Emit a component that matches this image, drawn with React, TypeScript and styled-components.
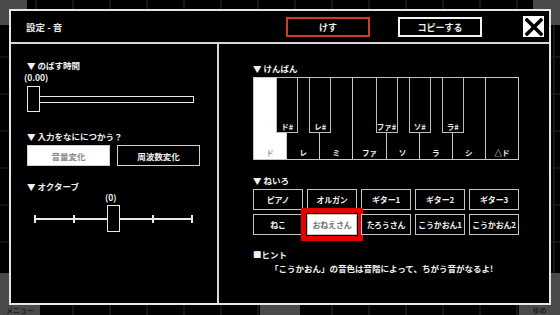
import styled, { createGlobalStyle, css } from "styled-components";

const GlobalStyle = createGlobalStyle`
  html, body {
    margin: 0;
    padding: 0;
    background: #000;
  }
  body {
    font-family: "Noto Sans CJK JP", "Noto Sans", sans-serif;
    font-weight: 700;
    color: #fff;
  }
`;

const Stage = styled.div`
  position: relative;
  width: 560px;
  height: 315px;
  overflow: hidden;
  background-color: #000;
  background-image: repeating-linear-gradient(90deg, transparent 0 35px, #161616 35px 37px),
    repeating-linear-gradient(0deg, transparent 0 35px, #121212 35px 37px);
`;

const BgTile = styled.div<{ $x: number; $y: number; $w: number; $h: number }>`
  position: absolute;
  left: ${(p) => p.$x}px;
  top: ${(p) => p.$y}px;
  width: ${(p) => p.$w}px;
  height: ${(p) => p.$h}px;
  background: #4a4a4a;
  color: #222;
  font-size: 7px;
  display: flex;
  align-items: flex-end;
  justify-content: center;
`;

const Modal = styled.div`
  position: absolute;
  left: 9px;
  top: 9px;
  width: 542px;
  height: 296px;
  box-sizing: border-box;
  border: 2px solid #e6e6e6;
  background: #000;
  display: flex;
  flex-direction: column;
`;

const Header = styled.div`
  height: 31px;
  border-bottom: 2px solid #d8d8d8;
  display: flex;
  align-items: center;
  padding: 0 5px 0 15px;
`;

const Title = styled.div`
  flex: 1;
  font-size: 9.5px;
  color: #e8e8e8;
`;

const HeaderButton = styled.div<{ $danger?: boolean; $gap: number }>`
  width: 84px;
  height: 20px;
  box-sizing: border-box;
  border: 2px solid ${(p) => (p.$danger ? "#d23a26" : "#f2f2f2")};
  margin-right: ${(p) => p.$gap}px;
  margin-top: 1px;
  display: flex;
  align-items: center;
  justify-content: center;
  font-size: 9px;
  color: #f0f0f0;
`;

const CloseButton = styled.div`
  width: 21px;
  height: 21px;
  background: #fff;
  display: flex;
  align-items: center;
  justify-content: center;
`;

const Body = styled.div`
  flex: 1;
  display: grid;
  grid-template-columns: 208px 1fr;
`;

const LeftPane = styled.div`
  border-right: 2px solid #d8d8d8;
  padding: 16px 0 0 16px;
  display: flex;
  flex-direction: column;
  align-items: flex-start;
`;

const RightPane = styled.div`
  padding: 19px 0 0 34px;
  display: flex;
  flex-direction: column;
  align-items: flex-start;
`;

const Label = styled.div<{ $mt?: number; $ml?: number }>`
  font-size: 8.5px;
  line-height: 11px;
  color: #f2f2f2;
  margin-top: ${(p) => p.$mt ?? 0}px;
  margin-left: ${(p) => p.$ml ?? 0}px;
  white-space: nowrap;
`;

const Slider = styled.div`
  margin-top: 3px;
  width: 167px;
  height: 26px;
  display: flex;
  align-items: center;
`;

const thumbStyle = css`
  width: 13px;
  height: 26px;
  box-sizing: border-box;
  border: 1.5px solid #e8e8e8;
  background: #000;
`;

const Thumb = styled.div`
  ${thumbStyle}
  flex: none;
`;

const Track = styled.div`
  flex: 1;
  height: 7px;
  box-sizing: border-box;
  border: 1.5px solid #e8e8e8;
  border-left: none;
`;

const ChoiceRow = styled.div`
  margin-top: 3px;
  display: flex;
  gap: 7px;
`;

const Choice = styled.div<{ $active?: boolean }>`
  width: 83px;
  height: 21px;
  box-sizing: border-box;
  border: 1.5px solid #d0d0d0;
  background: ${(p) => (p.$active ? "#fff" : "#000")};
  color: ${(p) => (p.$active ? "#888" : "#f0f0f0")};
  display: flex;
  align-items: center;
  justify-content: center;
  font-size: 8.5px;
`;

const Octave = styled.div`
  position: relative;
  margin-top: 2px;
  margin-left: 7px;
  width: 159px;
  height: 27px;
  display: flex;
  align-items: center;
  justify-content: space-between;
  background: linear-gradient(#e8e8e8, #e8e8e8) no-repeat 0 50% / 100% 2px;
`;

const Tick = styled.div`
  width: 2px;
  height: 8px;
  background: #e8e8e8;
`;

const OctaveThumb = styled.div`
  ${thumbStyle}
  position: absolute;
  left: 73px;
  top: 0;
  height: 27px;
`;

const Keyboard = styled.div`
  margin-top: 3px;
  width: 266px;
  height: 83px;
  box-sizing: border-box;
  border: 1.5px solid #c8c8c8;
  display: flex;
`;

const WhiteKey = styled.div<{ $lit?: boolean }>`
  position: relative;
  flex: 1;
  border-right: 1.5px solid #c8c8c8;
  background: ${(p) => (p.$lit ? "#fff" : "#000")};
  color: ${(p) => (p.$lit ? "#999" : "#eee")};
  display: flex;
  align-items: flex-end;
  justify-content: center;
  padding-bottom: 2px;
  font-size: 7.5px;
  line-height: 9px;
  &:last-child {
    border-right: none;
  }
`;

const BlackKey = styled.div`
  position: absolute;
  z-index: 1;
  top: -1.5px;
  right: -12px;
  width: 22px;
  height: 56px;
  box-sizing: border-box;
  border: 1.5px solid #bdbdbd;
  background: #000;
  color: #eee;
  font-size: 7.5px;
  line-height: 9px;
  display: flex;
  align-items: flex-end;
  justify-content: center;
  padding-bottom: 1px;
`;

const ToneGrid = styled.div`
  margin-top: 3px;
  display: grid;
  grid-template-columns: repeat(5, 50px);
  grid-auto-rows: 21px;
  gap: 4px 4px;
`;

const Tone = styled.div<{ $active?: boolean }>`
  box-sizing: border-box;
  border: 1.5px solid #c4c4c4;
  background: ${(p) => (p.$active ? "#fff" : "#000")};
  color: ${(p) => (p.$active ? "#777" : "#f0f0f0")};
  outline: ${(p) => (p.$active ? "5px solid #e80000" : "none")};
  outline-offset: 1px;
  display: flex;
  align-items: center;
  justify-content: center;
  font-size: 8px;
  letter-spacing: -0.2px;
  white-space: nowrap;
`;

const whites = ["ド", "レ", "ミ", "ファ", "ソ", "ラ", "シ", "△ド"];
const blacks: Record<number, string> = { 0: "ド#", 1: "レ#", 3: "ファ#", 4: "ソ#", 5: "ラ#" };
const tones = ["ピアノ", "オルガン", "ギター1", "ギター2", "ギター3", "ねこ", "おねえさん", "たろうさん", "こうかおん1", "こうかおん2"];

export default function App() {
  return (
    <>
      <GlobalStyle />
      <Stage>
        <BgTile $x={0} $y={0} $w={27} $h={25} />
        <BgTile $x={533} $y={0} $w={27} $h={25} />
        <BgTile $x={0} $y={273} $w={40} $h={42}>メニュー</BgTile>
        <BgTile $x={260} $y={305} $w={40} $h={10} />
        <BgTile $x={519} $y={273} $w={41} $h={42}>ゆめ</BgTile>
        <Modal>
          <Header>
            <Title>設定 - 音</Title>
            <HeaderButton $danger $gap={28}>けす</HeaderButton>
            <HeaderButton $gap={41}>コピーする</HeaderButton>
            <CloseButton>
              <svg width="18" height="18" viewBox="0 0 18 18">
                <path d="M2 2 L16 16 M16 2 L2 16" stroke="#000" strokeWidth="3.6" strokeLinecap="square" />
              </svg>
            </CloseButton>
          </Header>
          <Body>
            <LeftPane>
              <Label>▼ のばす時間</Label>
              <Label $mt={1} $ml={-3}>(0.00)</Label>
              <Slider>
                <Thumb />
                <Track />
              </Slider>
              <Label $mt={19}>▼ 入力をなににつかう？</Label>
              <ChoiceRow>
                <Choice $active>音量変化</Choice>
                <Choice>周波数変化</Choice>
              </ChoiceRow>
              <Label $mt={15}>▼ オクターブ</Label>
              <Label $ml={78}>(0)</Label>
              <Octave>
                <Tick />
                <Tick />
                <Tick />
                <Tick />
                <Tick />
                <OctaveThumb />
              </Octave>
            </LeftPane>
            <RightPane>
              <Label>▼ けんばん</Label>
              <Keyboard>
                {whites.map((w, i) => (
                  <WhiteKey key={w} $lit={i === 0}>
                    {w}
                    {blacks[i] && <BlackKey>{blacks[i]}</BlackKey>}
                  </WhiteKey>
                ))}
              </Keyboard>
              <Label $mt={15}>▼ ねいろ</Label>
              <ToneGrid>
                {tones.map((t) => (
                  <Tone key={t} $active={t === "おねえさん"}>
                    {t}
                  </Tone>
                ))}
              </ToneGrid>
              <Label $mt={14}>■ヒント</Label>
              <Label $mt={3} $ml={17}>「こうかおん」の音色は音階によって、ちがう音がなるよ!</Label>
            </RightPane>
          </Body>
        </Modal>
      </Stage>
    </>
  );
}
